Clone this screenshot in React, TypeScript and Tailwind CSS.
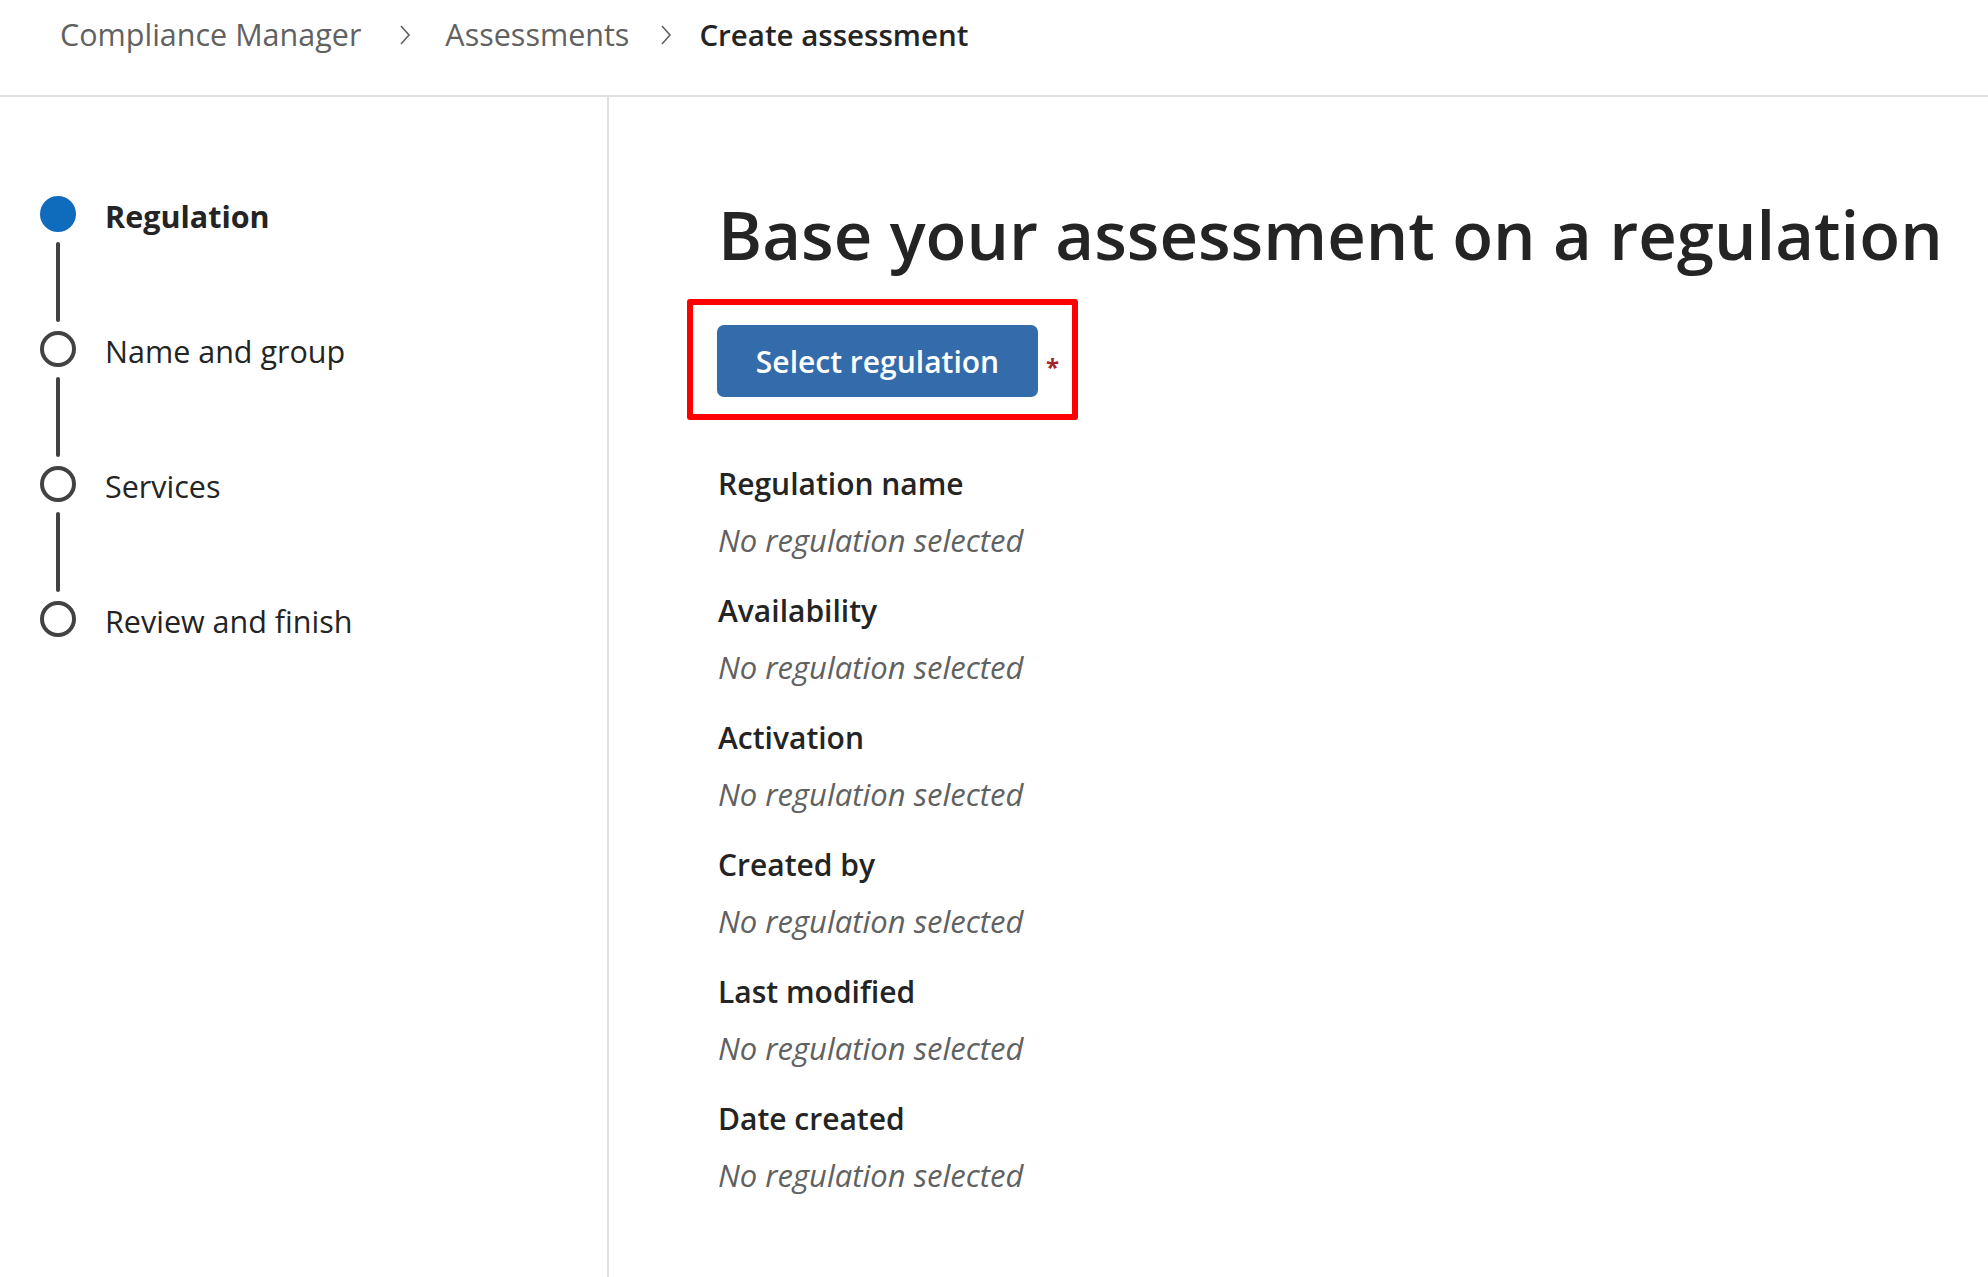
export default function App() {
  const steps = [
    { label: 'Regulation', active: true },
    { label: 'Name and group', active: false },
    { label: 'Services', active: false },
    { label: 'Review and finish', active: false },
  ];

  const fields = ['Regulation name', 'Availability', 'Activation', 'Created by', 'Last modified', 'Date created'];

  const Chevron = ({ className }: { className: string }) => (
    <svg width="14" height="24" viewBox="0 0 14 24" fill="none" stroke="#616161" strokeWidth="1.6" className={className}>
      <path d="M3 3 L11 12 L3 21" />
    </svg>
  );

  return (
    <div className="min-h-screen bg-white text-[#242424]" style={{ fontFamily: '"Open Sans", "Noto Sans", sans-serif' }}>
      {/* Breadcrumb */}
      <div className="h-[97px] border-b-2 border-[#e0e0e0] pl-[60px] pt-[14px] flex items-start">
        <div className="flex items-center h-[42px] text-[30.5px]">
          <span className="text-[#616161]">Compliance Manager</span>
          <Chevron className="ml-[37px] mr-[33px]" />
          <span className="text-[#616161]">Assessments</span>
          <Chevron className="ml-[30px] mr-[26px]" />
          <span className="font-semibold text-[29.5px] text-[#242424]">Create assessment</span>
        </div>
      </div>

      <div className="flex min-h-[1180px]">
        {/* Steps */}
        <div className="w-[609px] shrink-0 border-r-2 border-[#e0e0e0] pl-[40px] pt-[99px]">
          {steps.map((s, i) => (
            <div key={s.label} className="flex items-start">
              <div className="w-9 flex flex-col items-center">
                {s.active ? (
                  <div className="w-9 h-9 rounded-full bg-[#0f6cbd]" />
                ) : (
                  <div className="w-9 h-9 rounded-full border-4 border-[#424242]" />
                )}
                {i < steps.length - 1 && <div className="w-[4px] h-[80px] mt-[10px] mb-[9px] rounded-full bg-[#424242]" />}
              </div>
              <div className={`ml-[29px] h-9 leading-[40px] text-[30.5px] whitespace-nowrap ${s.active ? 'font-bold' : ''}`}>{s.label}</div>
            </div>
          ))}
        </div>

        {/* Main */}
        <div className="pl-[109px] pt-[92px]">
          <h1 className="text-[67px] leading-[91px] font-semibold text-[#242424] whitespace-nowrap">Base your assessment on a regulation</h1>

          <div className="mt-[19px] -ml-[31px] w-[391px] h-[121px] border-[6px] border-[#ff0000] rounded-[3px] pl-[24px] pt-[20px] flex items-start">
            <button className="w-[321px] h-[72px] rounded-[7px] bg-[#346cab] text-white text-[30px] font-semibold">Select regulation</button>
            <span className="ml-[8px] mt-[30px] text-[#a4262c] text-[24px] font-bold leading-none">*</span>
          </div>

          <div className="mt-[44px]">
            {fields.map((f, i) => (
              <div key={f} className={i > 0 ? 'mt-[31px]' : ''}>
                <div className="text-[30px] leading-[40px] font-semibold text-[#242424]">{f}</div>
                <div className="mt-[16px] text-[31px] leading-[40px] italic text-[#616161]">No regulation selected</div>
              </div>
            ))}
          </div>
        </div>
      </div>
    </div>
  );
}
